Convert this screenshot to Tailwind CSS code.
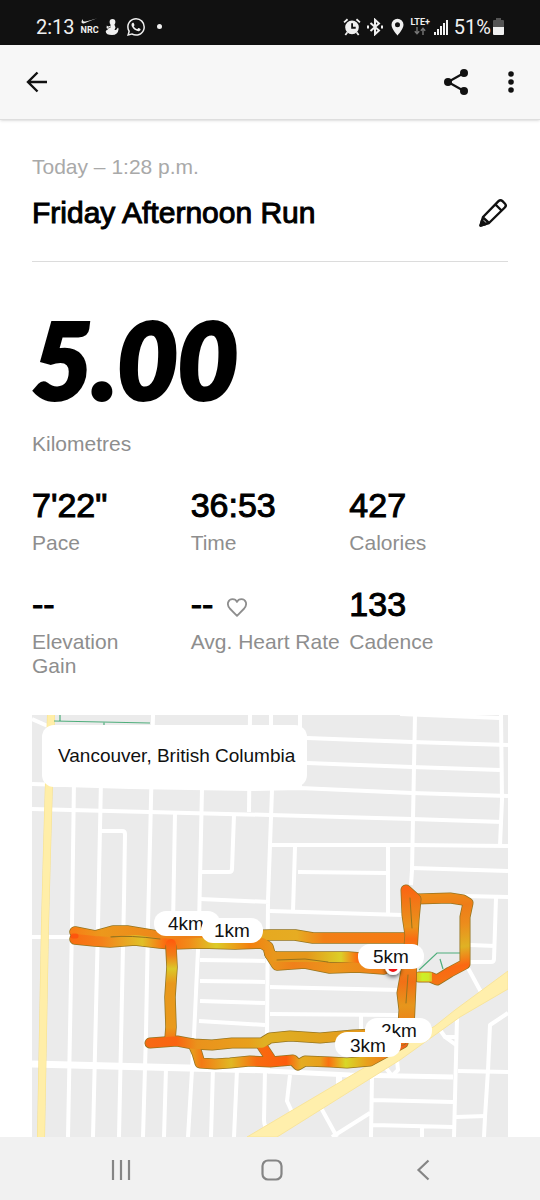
<!DOCTYPE html>
<html lang="en">
<head>
<meta charset="utf-8">
<meta name="viewport" content="width=device-width, initial-scale=1">
<title>Friday Afternoon Run</title>
<script src="https://cdn.jsdelivr.net/npm/@tailwindcss/browser@4"></script>
</head>
<body class="bg-white font-['Liberation_Sans',Arial,sans-serif] text-black">
<div class="flex min-h-screen flex-col">

  <!-- System status bar -->
  <div class="flex h-[45px] items-center justify-between bg-[#111111] pt-2 pr-9 pl-9 font-['Roboto',sans-serif] text-[#f0f0f0]">
    <div class="flex items-center">
      <span class="text-[20px] leading-6">2:13</span>
      <div class="ml-1.5 flex flex-col items-center" aria-label="NRC">
        <svg class="h-[6px] w-[18px]" viewBox="0 0 18 6" fill="#f0f0f0"><path d="M2 1C0 3 0 5.600 2.600 5.400C4 5.300 8 3 17.500 0C10 2 5 3.800 3.200 3.600C1.800 3.400 1.600 2 2 1Z"/></svg>
        <span class="text-[9px] leading-[12px] font-bold">NRC</span>
      </div>
      <svg class="ml-1.5 h-[18px] w-[14px]" viewBox="0 0 14 18" fill="#f0f0f0"><circle cx="7.500" cy="4" r="2.900"/><path d="M5.500 5.500H9L10.500 9.500L9.500 12H11L13 9.500L13.600 11Q13 17 7 17Q1 17 .7 13.500Q1 12.200 3 11.600Q.8 9.500 1.800 7.500L3.200 8.500L5.600 7.800Z"/><path d="M2.500 10.500L6 8.800" stroke="#111" stroke-width=".6"/></svg>
      <svg class="ml-2 h-[18px] w-[18px]" viewBox="0 0 24 24" fill="#f0f0f0"><path d="M17.472 14.382c-.297-.149-1.758-.867-2.030-.967-.273-.099-.471-.148-.67.150-.197.297-.767.966-.940 1.164-.173.199-.347.223-.644.075-.297-.150-1.255-.463-2.390-1.475-.883-.788-1.480-1.761-1.653-2.059-.173-.297-.018-.458.130-.606.134-.133.298-.347.446-.520.149-.174.198-.298.298-.497.099-.198.050-.371-.025-.520-.075-.149-.669-1.612-.916-2.207-.242-.579-.487-.500-.669-.510-.173-.008-.371-.010-.570-.010-.198 0-.520.074-.792.372-.272.297-1.040 1.016-1.040 2.479 0 1.462 1.065 2.875 1.213 3.074.149.198 2.096 3.200 5.077 4.487.709.306 1.262.489 1.694.625.712.227 1.360.195 1.871.118.571-.085 1.758-.719 2.006-1.413.248-.694.248-1.289.173-1.413-.074-.124-.272-.198-.570-.347m-5.421 7.403h-.004a9.870 9.870 0 01-5.031-1.378l-.361-.214-3.741.982.998-3.648-.235-.374a9.860 9.860 0 01-1.510-5.260c.001-5.450 4.436-9.884 9.888-9.884 2.640 0 5.122 1.030 6.988 2.898a9.825 9.825 0 012.893 6.994c-.003 5.450-4.437 9.884-9.885 9.884m8.413-18.297A11.815 11.815 0 0012.050 0C5.495 0 .160 5.335.157 11.892c0 2.096.547 4.142 1.588 5.945L.057 24l6.305-1.654a11.882 11.882 0 005.683 1.448h.005c6.554 0 11.890-5.335 11.893-11.893a11.821 11.821 0 00-3.480-8.413Z"/></svg>
      <span class="ml-3 size-[5px] rounded-full bg-[#f0f0f0]"></span>
    </div>
    <div class="flex items-center">
      <svg class="h-[18px] w-[18px]" viewBox="0 0 17 17" fill="none" stroke="#f0f0f0" stroke-width="1.700"><circle cx="8.500" cy="8.800" r="5.600" fill="#f0f0f0"/><path d="M1 4.200L4.300 1.200M16 4.200L12.700 1.200M4.200 13.500L2.200 16M12.800 13.500L14.800 16"/><path d="M8.600 5V9.200H12" stroke="#111"/></svg>
      <svg class="ml-[6px] h-[18px] w-[16px]" viewBox="0 0 16 18" fill="none" stroke="#f0f0f0" stroke-width="2"><path d="M3.500 5L12 12.500L8 16.200V1.800L12 5.500L3.500 13"/><path d="M1 7.500V10.500M15 7.500V10.500" /></svg>
      <svg class="ml-2 h-[18px] w-[13px]" viewBox="0 0 13 18"><path fill="#f0f0f0" fill-rule="evenodd" d="M6.500 .8A6 6 0 0 0 .5 6.800C.5 11 6.500 17.500 6.500 17.500S12.500 11 12.500 6.800A6 6 0 0 0 6.500 .8ZM6.500 4.300A2.500 2.500 0 1 1 6.500 9.300A2.500 2.500 0 1 1 6.500 4.300Z"/></svg>
      <div class="ml-1.5 flex flex-col items-center">
        <span class="text-[9px] leading-[9px] font-bold">LTE+</span>
        <svg class="h-[8px] w-[12px]" viewBox="0 0 12 8" fill="none" stroke="#777" stroke-width="1.400"><path d="M3 0V6.500M.8 4.300L3 6.700L5.200 4.300M9 8V1.300M6.800 3.700L9 1.300L11.200 3.700"/></svg>
      </div>
      <svg class="ml-1 h-[16px] w-[14px]" viewBox="0 0 14 16" fill="#f0f0f0"><path d="M0 13h2v3H0zM3 10h2v6H3zM6 7h2v9H6zM9 4h2v12H9zM12 1h2v15h-2z"/></svg>
      <span class="ml-[6px] text-[20px] leading-6">51%</span>
      <svg class="ml-0.5 h-[17px] w-[11px]" viewBox="0 0 11 17"><path fill="#555" d="M3 0h5v2h2q1 0 1 1v6H0V3q0-1 1-1h2z"/><path fill="#f0f0f0" d="M0 9h11v7q0 1-1 1H1q-1 0-1-1z"/></svg>
    </div>
  </div>

  <!-- App bar -->
  <header class="flex h-[75px] items-center justify-between border-b border-[#dedede] bg-[#f7f7f7] pr-5 pl-6 shadow-sm">
    <button type="button" aria-label="Back" class="flex size-6 items-center justify-center">
      <svg class="size-6" viewBox="0 0 24 24" fill="none" stroke="#111" stroke-width="2.400"><path d="M23 12H4M13.500 2.500L4 12L13.500 21.500"/></svg>
    </button>
    <div class="flex items-center gap-8">
      <button type="button" aria-label="Share">
        <svg class="h-[28px] w-[26px]" viewBox="0 0 26 28" fill="#111"><path d="M20 5L4 14L20 23" fill="none" stroke="#111" stroke-width="2.200"/><circle cx="4" cy="14" r="4"/><circle cx="20" cy="5" r="4"/><circle cx="20" cy="23" r="4"/></svg>
      </button>
      <button type="button" aria-label="More options">
        <svg class="h-[24px] w-[18px]" viewBox="0 0 18 24" fill="#111"><circle cx="9" cy="4" r="2.800"/><circle cx="9" cy="12" r="2.800"/><circle cx="9" cy="20" r="2.800"/></svg>
      </button>
    </div>
  </header>

  <main class="flex-1 px-8 pt-[35px]">
    <p class="text-[21px] leading-6 text-[#a9a9a9]">Today – 1:28 p.m.</p>
    <div class="mt-4 flex items-center justify-between border-b border-[#dcdcdc] pb-[30px]">
      <h1 class="text-[30px] leading-9 [-webkit-text-stroke:1px_#000]">Friday Afternoon Run</h1>
      <button type="button" aria-label="Edit run name">
        <svg class="size-[30px]" viewBox="0 0 30 30" fill="none" stroke="#111" stroke-width="2.400" stroke-linejoin="round"><path d="M2.500 27.500L5 19L20.500 3.200Q22.500 1.200 24.500 3.200L26.800 5.500Q28.800 7.500 26.800 9.500L11 25ZM17.500 6.500L23.500 12.500M5 19.500L11 25"/><path d="M2.500 27.500L4 22.500L7.500 26Z" fill="#111"/></svg>
      </button>
    </div>

    <p class="mt-[47px] font-['Lato',sans-serif] text-[104px] leading-[100px] font-black italic [-webkit-text-stroke:4px_#000]">5.00</p>
    <p class="mt-[23px] text-[21px] leading-6 text-[#8e8e8e]">Kilometres</p>

    <dl class="mt-[29px] grid grid-cols-3 gap-y-[29px] text-[21px] leading-6 text-[#8e8e8e]">
      <div class="flex flex-col-reverse justify-end gap-1.5">
        <dt>Pace</dt><dd class="text-[34px] leading-10 text-black [-webkit-text-stroke:1px_#000]">7'22"</dd>
      </div>
      <div class="flex flex-col-reverse justify-end gap-1.5">
        <dt>Time</dt><dd class="text-[34px] leading-10 text-black [-webkit-text-stroke:1px_#000]">36:53</dd>
      </div>
      <div class="flex flex-col-reverse justify-end gap-1.5">
        <dt>Calories</dt><dd class="text-[34px] leading-10 text-black [-webkit-text-stroke:1px_#000]">427</dd>
      </div>
      <div class="flex flex-col-reverse justify-end gap-1.5">
        <dt class="max-w-32">Elevation Gain</dt><dd class="text-[34px] leading-10 text-black [-webkit-text-stroke:1px_#000]">--</dd>
      </div>
      <div class="flex flex-col-reverse justify-end gap-1.5">
        <dt class="whitespace-nowrap">Avg. Heart Rate</dt>
        <dd class="flex items-center gap-3.5 text-[34px] leading-10 text-black [-webkit-text-stroke:1px_#000]">--
          <svg class="mt-1.5 h-[19px] w-[20px]" viewBox="0 0 20 19" fill="none" stroke="#8e8e8e" stroke-width="1.800" stroke-linejoin="round"><path d="M10 17.800L2.800 10.500C-1 6 1.500 1.200 5.500 1.200C8 1.200 9.500 2.800 10 4C10.500 2.800 12 1.200 14.500 1.200C18.500 1.200 21 6 17.200 10.500Z"/></svg>
        </dd>
      </div>
      <div class="flex flex-col-reverse justify-end gap-1.5">
        <dt>Cadence</dt><dd class="text-[34px] leading-10 text-black [-webkit-text-stroke:1px_#000]">133</dd>
      </div>
    </dl>

    <!-- Route map -->
    <section class="relative mt-[37px]" aria-label="Route map">
      <svg class="block h-auto w-full" viewBox="32 715 476 422" font-family="Liberation Sans, Arial, sans-serif">
        <defs>
          <linearGradient id="top" gradientUnits="userSpaceOnUse" x1="68" y1="0" x2="405" y2="0">
            <stop offset="0" stop-color="#f97a14"/><stop offset=".1" stop-color="#ec981c"/><stop offset=".35" stop-color="#ee7f18"/><stop offset=".55" stop-color="#e6a820"/><stop offset=".68" stop-color="#e6ac22"/><stop offset=".76" stop-color="#f27f16"/><stop offset="1" stop-color="#f57a14"/>
          </linearGradient>
          <linearGradient id="low" gradientUnits="userSpaceOnUse" x1="68" y1="0" x2="405" y2="0">
            <stop offset="0" stop-color="#fa6a10"/><stop offset=".1" stop-color="#f4811a"/><stop offset=".22" stop-color="#e0c028"/><stop offset=".29" stop-color="#fc6a10"/><stop offset=".36" stop-color="#f18c1a"/><stop offset=".44" stop-color="#dccb28"/><stop offset=".54" stop-color="#f4800f"/><stop offset=".61" stop-color="#e8971c"/><stop offset=".71" stop-color="#e5981c"/><stop offset=".81" stop-color="#dccf28"/><stop offset=".86" stop-color="#fb6a10"/><stop offset="1" stop-color="#ee8a1a"/>
          </linearGradient>
          <linearGradient id="mid" gradientUnits="userSpaceOnUse" x1="265" y1="0" x2="405" y2="0">
            <stop offset="0" stop-color="#e89a1c"/><stop offset=".2" stop-color="#f0801a"/><stop offset=".5" stop-color="#e9961c"/><stop offset="1" stop-color="#f47416"/>
          </linearGradient>
          <linearGradient id="left" gradientUnits="userSpaceOnUse" x1="0" y1="940" x2="0" y2="1043">
            <stop offset="0" stop-color="#ff5a0c"/><stop offset=".15" stop-color="#f08018"/><stop offset=".28" stop-color="#dcc828"/><stop offset=".42" stop-color="#e8981c"/><stop offset=".85" stop-color="#e99a1c"/><stop offset="1" stop-color="#fa6a10"/>
          </linearGradient>
          <linearGradient id="south" gradientUnits="userSpaceOnUse" x1="145" y1="0" x2="405" y2="0">
            <stop offset="0" stop-color="#f66a14"/><stop offset=".12" stop-color="#fa6410"/><stop offset=".2" stop-color="#ea921c"/><stop offset=".4" stop-color="#e8a01c"/><stop offset=".46" stop-color="#e0b024"/><stop offset=".6" stop-color="#e0a820"/><stop offset="1" stop-color="#ea901a"/>
          </linearGradient>
          <linearGradient id="bottom" gradientUnits="userSpaceOnUse" x1="193" y1="0" x2="405" y2="0">
            <stop offset="0" stop-color="#e89a1c"/><stop offset=".04" stop-color="#f47a14"/><stop offset=".18" stop-color="#e0b824"/><stop offset=".3" stop-color="#f86c10"/><stop offset=".44" stop-color="#fd5c0c"/><stop offset=".51" stop-color="#e4ac22"/><stop offset=".6" stop-color="#e8a01c"/><stop offset=".64" stop-color="#fa7010"/><stop offset=".72" stop-color="#d8d828"/><stop offset=".82" stop-color="#e8a01c"/><stop offset="1" stop-color="#f2601a"/>
          </linearGradient>
          <linearGradient id="east" gradientUnits="userSpaceOnUse" x1="0" y1="887" x2="0" y2="1045">
            <stop offset="0" stop-color="#fc6412"/><stop offset=".12" stop-color="#f07c18"/><stop offset=".25" stop-color="#ea941c"/><stop offset=".33" stop-color="#fa6c12"/><stop offset=".45" stop-color="#ea8c1c"/><stop offset=".6" stop-color="#f27016"/><stop offset=".75" stop-color="#e6961c"/><stop offset="1" stop-color="#f46a14"/>
          </linearGradient>
          <linearGradient id="loop" gradientUnits="userSpaceOnUse" x1="440" y1="895" x2="455" y2="985">
            <stop offset="0" stop-color="#ee8c18"/><stop offset=".15" stop-color="#ee7c18"/><stop offset=".35" stop-color="#ec8c1c"/><stop offset=".6" stop-color="#dfb224"/><stop offset=".8" stop-color="#fb6812"/><stop offset="1" stop-color="#f27814"/>
          </linearGradient>
          <linearGradient id="lime" gradientUnits="userSpaceOnUse" x1="415" y1="0" x2="436" y2="0">
            <stop offset="0" stop-color="#f0b020"/><stop offset=".35" stop-color="#ccf028"/><stop offset=".65" stop-color="#d0e828"/><stop offset="1" stop-color="#f08a1a"/>
          </linearGradient>
          <filter id="shade" x="-50%" y="-50%" width="200%" height="200%"><feDropShadow dx="0" dy="2" stdDeviation="2" flood-opacity=".6"/></filter>
        </defs>

        <rect x="32" y="715" width="476" height="422" fill="#ebebeb"/>

        <!-- Streets -->
        <g fill="none" stroke="#fff" stroke-width="4" stroke-linejoin="round">
          <path d="M32 784L130 787L250 789L300 788L412 793L508 796M32 809L270 815L412 819L503 822M32 719L50 727" />
          <path d="M74 780L72 925L68 1137M101 780L98 925L93 1137M153 715L151 800L148 925L146 1033L143 1137M175 813L173 925M202 789L199 925L198 950L194 1035L192 1070L188 1137"/>
          <path d="M100 831H122Q125 831 125 834L124 900L119 1137M234 815L232 869Q232 872 229 872H201M200 899L270 902M250 715L249 812M271 715V726M300 715V789M272 790L270 845L268 900L267 1040"/>
          <path d="M307 738L412 742L508 745M307 763L412 767L500 770M400 714L500 718M270 845H412L508 846M298 872L387 873M412 868L508 871M270 911L403 915M420 895L508 897"/>
          <path d="M415 715L412 870L411 885M501 715L502 800L500 845M295 847L293 911M388 847V913M496 898L494 959Q494 962 491 962H470M470 945L495 946"/>
          <path d="M32 937H70M200 960L265 961M200 981L265 982M200 1001L265 1003M199 1021L265 1025M270 987L400 990M270 1014L398 1015M361 1016V1032"/>
          <path d="M166 1068L164 1137M213 1068L211 1137M237 1070L234 1137M265 1070L264 1120Q264 1128 270 1132"/>
          <path d="M290 1075L287 1101L292 1112M320 1106L337 1137M332 1137L370 1113M372 1076L371 1137M373 1100L453 1102M373 1125L453 1127M422 1127V1137M457 1018L454 1137M456 1117L486 1116M458 1071L508 1072"/>
          <path d="M508 1013L490 1025L488 1070L485 1117L484 1137M468 968L481 992M438 1027L445 1037H456M445 1037L456 1045M397 1060L398 1070L392 1076L386 1068"/>
          <path d="M32 1064L270 1070" stroke-width="7"/>
          <path d="M268 1071L350 1075L453 1077" stroke-width="5"/>
          <path d="M339 1076V1085" stroke-width="6"/>
        </g>

        <!-- Main roads -->
        <path d="M51 715L47 850L45 925L41 1137" fill="none" stroke="#f6e08e" stroke-width="8"/>
        <path d="M51 715L47 850L45 925L41 1137" fill="none" stroke="#ffeea8" stroke-width="7"/>
        <path d="M508 971L455 1010L435 1026L247 1137H277L400 1060L460 1017L508 989Z" fill="#ffefac" stroke="#f8e49c"/>

        <!-- Bike paths -->
        <path d="M54 721L150 723M60 715V721M104 722V725M419 970L437 953H460M440 959L443 969" fill="none" stroke="#4fae7c" stroke-width="1.200"/>

        <!-- Recorded route, dark casing below each coloured line -->
        <g fill="none" stroke-linecap="round" stroke-linejoin="round">
          <g stroke="#94741e" stroke-width="11.500">
            <path d="M75 932L95 936L113 931L127 931L157 936L200 937L270 935L295 935L313 938L404 938"/>
            <path d="M75 939L95 941L110 942L135 940L160 943L172 944L200 943L235 944L262 943L268 947L270 954L275 957L320 957L348 957L384 960"/>
            <path d="M270 954L277 965L305 963L330 968L357 967L384 969"/>
          </g>
          <g stroke-width="10">
            <path stroke="url(#top)" d="M75 932L95 936L113 931L127 931L157 936L200 937L270 935L295 935L313 938L404 938"/>
            <path stroke="url(#mid)" d="M270 954L277 965L305 963L330 968L357 967L384 969"/>
            <path stroke="url(#low)" d="M75 939L95 941L110 942L135 940L160 943L172 944L200 943L235 944L262 943L268 947L270 954L275 957L320 957L348 957L384 960"/>
          </g>
          <path d="M111 937Q130 935 160 939M277 960L305 959L328 962" stroke="#94741e" stroke-width="1"/>

          <path stroke="#94741e" stroke-width="11.500" d="M171 947L172 967L170 997L171 1027L170 1040"/>
          <path stroke="#94741e" stroke-width="11" d="M193 1044L197 1053L200 1063L215 1064L230 1063L250 1061L270 1062L293 1060L298 1065L305 1061L330 1062L347 1063L370 1061L403 1043M262 1046L270 1058"/>
          <path stroke="#94741e" stroke-width="11" d="M150 1043L177 1041L193 1044L212 1045L232 1043L262 1043L270 1038L290 1036L320 1038L353 1035L395 1033"/>
          <path stroke="url(#left)" stroke-width="10" d="M171 944L172 967L170 997L171 1027L170 1040"/>
          <path stroke="url(#bottom)" stroke-width="9.500" d="M193 1044L197 1053L200 1063L215 1064L230 1063L250 1061L270 1062L293 1060L298 1065L305 1061L330 1062L347 1063L370 1061L403 1043M262 1046L270 1058"/>
          <path stroke="url(#south)" stroke-width="9.500" d="M150 1043L177 1041L193 1044L212 1045L232 1043L262 1043L270 1038L290 1036L320 1038L353 1035L395 1033"/>

          <path stroke="#94741e" stroke-width="11" d="M416 899L450 898L463 900L468 903L465 917L465 964L450 972L437 980L430 977L419 977"/>
          <path stroke="url(#loop)" stroke-width="9.500" d="M416 899L450 898L463 900L468 903L465 917L465 964L450 972L437 980L430 977L419 977"/>
          <path stroke="#94741e" stroke-width="11" d="M406 890L407 915L410 935L408 960L402 993L404 1010L402 1040M406 890L416 899L414 920L412 953L411 985L409 1030"/>
          <path stroke="url(#east)" stroke-width="9.500" d="M406 890L407 915L410 935L408 960L402 993L404 1010L402 1040M406 890L416 899L414 920L412 953L411 985L409 1030"/>
          <path stroke="url(#lime)" stroke-width="9" stroke-linecap="butt" d="M417 977H432"/>
          <path stroke="#94741e" stroke-width="1" d="M410 898L412 928M408 975L406 1003"/>
          <path stroke="#ff4a0c" stroke-width="5" stroke-opacity=".7" d="M73 936H76"/>
        </g>

        <!-- Finish marker -->
        <circle cx="393" cy="967" r="8" fill="#fff" filter="url(#shade)"/>
        <circle cx="393" cy="967" r="5" fill="#f01414"/>

        <!-- Kilometre splits -->
        <g fill="#fff" font-size="19">
          <rect x="154" y="911" width="66" height="25" rx="12"/>
          <text x="168" y="930" fill="#111">4km</text>
          <rect x="201" y="918" width="62" height="25" rx="12"/>
          <text x="214" y="937" fill="#111">1km</text>
          <rect x="358" y="944" width="66" height="25" rx="12"/>
          <text x="373" y="963" fill="#111">5km</text>
          <rect x="365" y="1018" width="67" height="25" rx="12"/>
          <text x="381" y="1037" fill="#111">2km</text>
          <rect x="335" y="1032" width="66" height="25" rx="12"/>
          <text x="350" y="1052" fill="#111">3km</text>
        </g>
      </svg>
      <p class="absolute top-2.5 left-2.5 rounded-xl bg-white py-[19px] pr-3 pl-4 text-[19px] leading-6 text-[#111]">Vancouver, British Columbia</p>
    </section>
  </main>

  <!-- System navigation -->
  <nav class="grid h-[63px] grid-cols-3 items-center bg-[#f1f1f1] pt-0.5 pr-[42px] pl-[46px]" aria-label="System">
    <button type="button" aria-label="Recent apps" class="flex justify-center">
      <svg class="h-[22px] w-[20px]" viewBox="0 0 20 22" stroke="#858585" stroke-width="2.200"><path d="M2 1V21M10 1V21M18 1V21"/></svg>
    </button>
    <button type="button" aria-label="Home" class="flex justify-center">
      <svg class="size-[22px]" viewBox="0 0 22 22" fill="none" stroke="#858585" stroke-width="2.200"><rect x="1.500" y="1.500" width="19" height="19" rx="5.500"/></svg>
    </button>
    <button type="button" aria-label="Back" class="flex justify-center">
      <svg class="h-[22px] w-[14px]" viewBox="0 0 14 22" fill="none" stroke="#858585" stroke-width="2.200"><path d="M12.500 1.500L2.500 11L12.500 20.500"/></svg>
    </button>
  </nav>
</div>
</body>
</html>
